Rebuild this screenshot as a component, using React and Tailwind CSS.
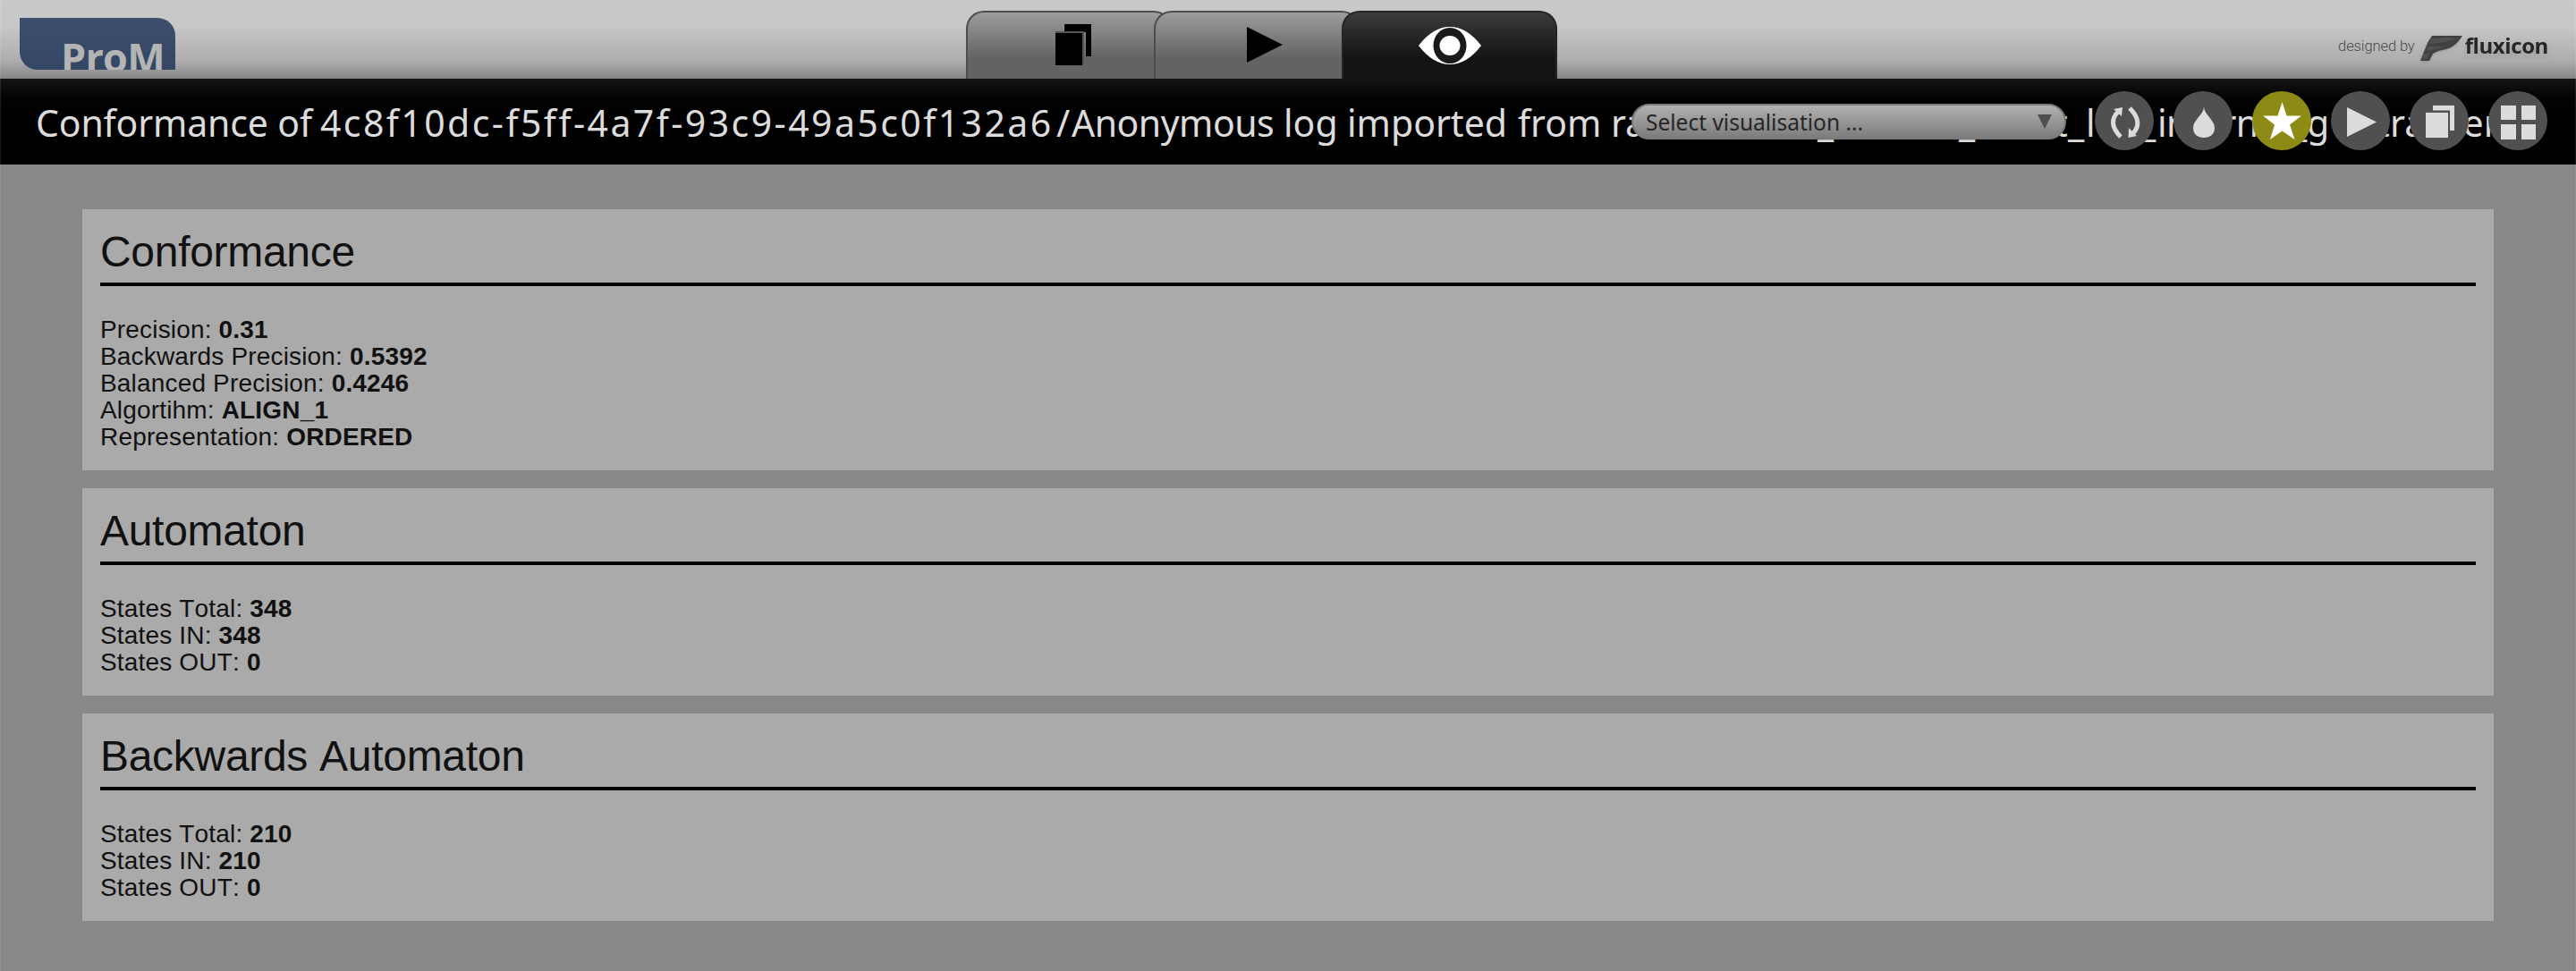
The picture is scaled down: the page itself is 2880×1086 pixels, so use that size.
const sections = [
  { title: "Conformance", height: "h-[292px]", rows: [["Precision", "0.31"], ["Backwards Precision", "0.5392"], ["Balanced Precision", "0.4246"], ["Algortihm", "ALIGN_1"], ["Representation", "ORDERED"]] },
  { title: "Automaton", height: "h-[232px]", rows: [["States Total", "348"], ["States IN", "348"], ["States OUT", "0"]] },
  { title: "Backwards Automaton", height: "h-[232px]", rows: [["States Total", "210"], ["States IN", "210"], ["States OUT", "0"]] },
];

const titleWords = [
  ["Conformance of", "w-[318px] tracking-[-0.15px]"],
  ["4c8f10dc-f5ff-4a7f-93c9-49a5c0f132a6", "w-[823px] tracking-[2.42px]"],
  ["/", "w-[17px]"],
  ["Anonymous", "w-[237px] tracking-[-0.5px]"],
  ["log", "w-[71px]"],
  ["imported", "w-[191px]"],
  ["from", "w-[104px]"],
  ["ra", "w-[231px]"],
  ["_", "w-[158px]"],
  ["_", "w-[107px]"],
  ["t", "w-[15px]"],
  ["_", "w-[20px]"],
  ["log", "w-[60px]"],
  ["_", "w-[20px]"],
  ["internal", "w-[149px] tracking-[-0.6px]"],
  ["_", "w-[18px]"],
  ["g", "w-[78px]"],
  ["tracker", "tracking-[0.2px]"],
];

function Tab({ active, children, className }) {
  return (
    <div
      className={`flex h-[76px] justify-center rounded-t-[20px] border-2 border-b-0 ${
        active
          ? "border-[#242424] bg-linear-to-b from-[#3c3c3c] to-[#131313] to-70%"
          : "border-[#4c4c4c] bg-linear-to-b from-[#9c9c9c] to-[#636363] to-70%"
      } ${className}`}
    >
      {children}
    </div>
  );
}

function RoundButton({ active, children }) {
  return (
    <div className={`h-[66px] w-[66px] shrink-0 rounded-full ${active ? "bg-[#8d8b15]" : "bg-[#505050]"}`}>
      <svg viewBox="0 0 66 66" className={`h-full w-full ${active ? "fill-white" : "fill-[#dcdcdc]"}`}>
        {children}
      </svg>
    </div>
  );
}

export default function App() {
  return (
    <div className="relative flex h-[1086px] w-[2880px] flex-col overflow-hidden bg-[#888888]">
      <header className="relative flex h-[88px] shrink-0 items-end justify-between bg-[linear-gradient(#c9c9c9_0px,#c8c8c8_28px,#adadad_68px,#858585_88px)]">
        <div className="mb-[10px] ml-[22px] flex h-[58px] w-[174px] overflow-hidden rounded-tr-[20px] rounded-bl-[20px] bg-linear-to-b from-[#3c4f6e] to-[#334765] pl-[46px]">
          <span className="mt-[17px] font-['Open_Sans',sans-serif] text-[45px] leading-[54px] font-bold tracking-[-0.8px] text-[#b4b4b4]">ProM</span>
        </div>
        <div className="absolute bottom-0 left-[1080px] flex">
          <Tab className="w-[230px]">
            <svg viewBox="0 0 40 52" className="mt-[10px] ml-[10px] h-[52px] w-[40px]">
              <path d="M10 3h30v36H34V12H10z" />
              <path d="M0 13h30v36H0z" />
              <path d="M0 12H31V49" fill="none" stroke="#555" strokeWidth="2" />
            </svg>
          </Tab>
          <Tab className="-ml-[20px] w-[230px]">
            <svg viewBox="0 0 40 40" className="mt-[16px] ml-[18px] h-[40px] w-[40px]"><path d="M0 0 40 20 0 40z" /></svg>
          </Tab>
          <Tab active className="-ml-[20px] w-[241px]">
            <svg viewBox="0 0 70 44" className="mt-[16px] h-[44px] w-[70px]">
              <path fill="#fff" d="M0 21Q16 0 35 0T70 21Q54 42 35 42T0 21z" />
              <ellipse cx="35" cy="21" rx="18.5" ry="20" fill="#1a1a1a" />
              <ellipse cx="35" cy="21" rx="11.5" ry="11" fill="#fff" />
            </svg>
          </Tab>
        </div>
        <div className="mr-[31px] flex h-[60px] items-start">
          <span className="mt-[12px] font-[Roboto,sans-serif] text-[16.5px] leading-[24px] font-light tracking-[-0.1px] text-[#4a4a4a]">designed by</span>
          <svg viewBox="0 0 48 32" className="mt-[11px] ml-[5px] h-[32px] w-[48px] drop-shadow">
            <path fill="#414141" d="M14 1H48Q40 14 30 16L21 18 15 21 11 29H1L9 9z" />
            <path fill="#505050" d="M13 4 34 3 42 4Q30 9 11 10zM9 13 28 13Q18 17 8 18zM5 21 12 20 8 27H3z" />
          </svg>
          <span className="mt-[8px] ml-[3px] font-['Open_Sans',sans-serif] text-[24px] leading-[30px] font-bold tracking-[-0.4px] text-[#262626] drop-shadow-md">fluxicon</span>
        </div>
      </header>

      <div className="relative h-[96px] shrink-0 bg-linear-to-b from-[#151515] to-black to-50%">
        <div className="flex pl-[40px] font-['Noto_Sans',sans-serif] text-[41px] leading-[98px] whitespace-pre text-[#dcdcdc]">
          {titleWords.map(([word, cls], i) => (
            <span key={i} className={`shrink-0 ${cls}`}>{word}</span>
          ))}
        </div>
        <div className="absolute top-[14px] right-[32px] flex gap-[22px]">
          <div className="mt-[14px] mr-[10px] flex h-[40px] w-[486px] items-center justify-between rounded-full border-2 border-[#7a7a7a] bg-linear-to-b from-[#b2b2b2] to-[#7c7c7c] pr-[14px] pl-[14px]">
            <span className="mt-[2px] font-['Noto_Sans',sans-serif] text-[24.5px] leading-[36px] text-[#262626]">Select visualisation ...</span>
            <svg viewBox="0 0 16 16" className="h-[16px] w-[16px] fill-[#4f4f4f]"><path d="M0 0h16L8 16z" /></svg>
          </div>
          <RoundButton>
            <g fill="none" stroke="#dcdcdc" strokeWidth="5">
              <path d="M27 22Q13 35 29 51" />
              <path d="M39 19Q55 35 42 48" />
            </g>
            <path d="M21 20 31 18 30 28zM37.500 52 38 41 47 50z" />
          </RoundButton>
          <RoundButton>
            <path d="M34 18C35 27 46 32 46 41C46 48 41 52 34 52S22 48 22 41C22 32 33 27 34 18z" />
          </RoundButton>
          <RoundButton active>
            <path d="M33.500 12 38.500 27.500H55L42 37.500 47.500 54 33.500 44.500 20 54 25 37.500 12 27.500H28.500z" />
          </RoundButton>
          <RoundButton><path d="M18 18 51 34.500 18 51z" /></RoundButton>
          <RoundButton><path d="M26 16h24v28h-5V21.500H26zM18 24h25v28H18z" /></RoundButton>
          <RoundButton><path d="M14 16h17v16H14zM37 16h16v16H37zM14 37h17v17H14zM37 37h16v17H37z" /></RoundButton>
        </div>
      </div>

      <main className="flex flex-col gap-5 px-[92px] pt-[50px] font-['Liberation_Sans',sans-serif] text-[#111111] [font-kerning:none]">
        {sections.map((s) => (
          <section key={s.title} className={`shrink-0 bg-[#aaaaaa] px-5 ${s.height}`}>
            <h2 className="h-[86px] border-b-4 border-black pt-[20px] text-[48px] leading-[55px] tracking-[-0.3px]">{s.title}</h2>
            <div className="pt-[34px] text-[28px] leading-[30px] tracking-[0.17px]">
              {s.rows.map(([k, v]) => (
                <p key={k}>{k}: <b>{v}</b></p>
              ))}
            </div>
          </section>
        ))}
      </main>
      <div className="pointer-events-none absolute inset-0 border-x border-white/10" />
    </div>
  );
}
